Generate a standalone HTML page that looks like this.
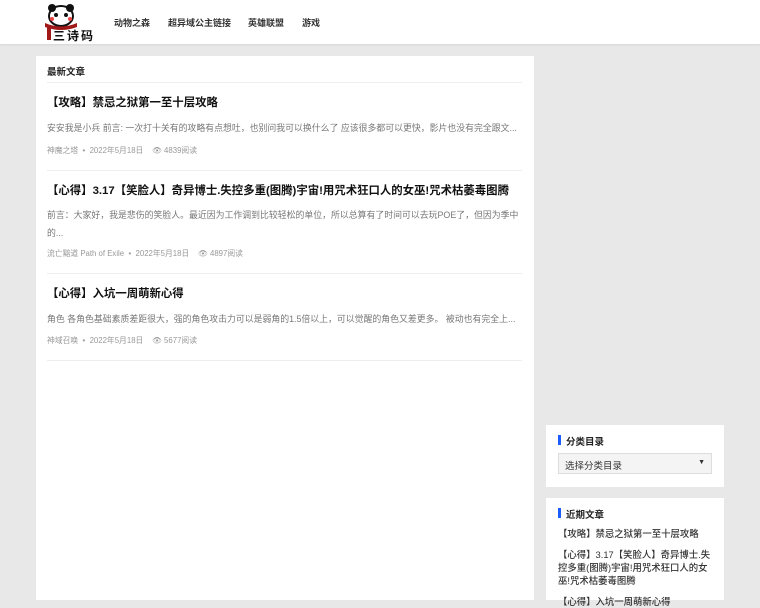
<!DOCTYPE html>
<html><head><meta charset="utf-8"><style>
*{margin:0;padding:0;box-sizing:border-box}
body{width:760px;height:600px;overflow:hidden;background:#e8e8e8;font-family:"Liberation Sans","Noto Sans CJK SC",sans-serif;position:relative;color:#222}
.hd{position:absolute;left:0;top:0;width:760px;height:44px;background:#fff;box-shadow:0 1px 2px rgba(0,0,0,.08)}
.nav{position:absolute;top:16px;font-size:9px;font-weight:bold;color:#333}
.a{position:absolute}
.card{position:absolute;background:#fff}
.t{position:absolute;left:47px;font-size:11.4px;font-weight:bold;color:#111;white-space:nowrap}
.ex{position:absolute;left:47px;font-size:8.9px;color:#777;white-space:nowrap}
.m{position:absolute;left:47px;font-size:7.8px;color:#999;white-space:nowrap}
.sep{position:absolute;left:47px;width:475px;height:1px;background:#eee}
.sw{font-size:9.5px;font-weight:bold;position:absolute;left:566px}
.bar{position:absolute;left:558px;width:3px;height:10px;background:#1a5cff}
.sl{position:absolute;left:558px;font-size:9.4px;color:#333;line-height:13px;width:158px;font-weight:500}
</style></head><body>
<div class="hd">
<svg class="a" style="left:42px;top:3px" width="56" height="40" viewBox="0 0 56 40">
<ellipse cx="19" cy="13" rx="12" ry="10" fill="#fff" stroke="#111" stroke-width="2"/>
<circle cx="10" cy="5" r="4" fill="#111"/><circle cx="28" cy="5" r="4" fill="#111"/>
<circle cx="14" cy="12" r="2" fill="#111"/><circle cx="24" cy="12" r="2" fill="#111"/>
<circle cx="10" cy="16" r="2" fill="#e44"/><circle cx="28" cy="16" r="2" fill="#e44"/>
<path d="M3 20 Q19 27 35 20 L35 24 Q19 30 3 24Z" fill="#a01818"/>
<rect x="5" y="23" width="4" height="14" fill="#a01818"/>
<text x="11" y="37" font-size="12" font-weight="bold" fill="#111" font-family="Noto Sans CJK SC" letter-spacing="2">三诗码</text>
</svg>
<div class="nav" style="left:114px">动物之森</div>
<div class="nav" style="left:168px">超异域公主链接</div>
<div class="nav" style="left:248px">英雄联盟</div>
<div class="nav" style="left:302px">游戏</div>
</div>
<div class="card" style="left:36px;top:56px;width:498px;height:544px"></div>
<div class="a" style="left:47px;top:64px;font-size:9.5px;font-weight:bold">最新文章</div>
<div class="sep" style="top:82px"></div>
<div class="t" style="top:94px">【攻略】禁忌之狱第一至十层攻略</div>
<div class="ex" style="top:121px">安安我是小兵 前言: 一次打十关有的攻略有点想吐，也别问我可以换什么了 应该很多都可以更快，影片也没有完全跟文...</div>
<div class="m" style="top:145px">神魔之塔 &nbsp;• &nbsp;2022年5月18日 &nbsp;&nbsp;&nbsp;👁 4839阅读</div>
<div class="sep" style="top:170px"></div>
<div class="t" style="top:182px">【心得】3.17【笑脸人】奇异博士.失控多重(图腾)宇宙!用咒术狂口人的女巫!咒术枯萎毒图腾</div>
<div class="ex" style="top:208px">前言：大家好，我是悲伤的笑脸人。最近因为工作调到比较轻松的单位，所以总算有了时间可以去玩POE了，但因为季中</div>
<div class="ex" style="top:226px">的...</div>
<div class="m" style="top:248px">流亡黯道 Path of Exile &nbsp;• &nbsp;2022年5月18日 &nbsp;&nbsp;&nbsp;👁 4897阅读</div>
<div class="sep" style="top:273px"></div>
<div class="t" style="top:285px">【心得】入坑一周萌新心得</div>
<div class="ex" style="top:312px">角色 各角色基础素质差距很大，强的角色攻击力可以是弱角的1.5倍以上，可以觉醒的角色又差更多。 被动也有完全上...</div>
<div class="m" style="top:335px">神域召唤 &nbsp;• &nbsp;2022年5月18日 &nbsp;&nbsp;&nbsp;👁 5677阅读</div>
<div class="sep" style="top:360px"></div>

<div class="card" style="left:546px;top:425px;width:178px;height:62px"></div>
<div class="bar" style="top:435px"></div><div class="sw" style="top:434px">分类目录</div>
<div class="a" style="left:558px;top:453px;width:154px;height:21px;background:#f4f4f4;border:1px solid #ddd;font-size:9.5px;padding:4px 6px;color:#333">选择分类目录<span style="position:absolute;right:6px;top:5px;font-size:7px">▼</span></div>
<div class="card" style="left:546px;top:498px;width:178px;height:102px"></div>
<div class="bar" style="top:508px"></div><div class="sw" style="top:507px">近期文章</div>
<div class="sl" style="top:527px">【攻略】禁忌之狱第一至十层攻略</div>
<div class="sl" style="top:548px">【心得】3.17【笑脸人】奇异博士.失控多重(图腾)宇宙!用咒术狂口人的女巫!咒术枯萎毒图腾</div>
<div class="sl" style="top:595px">【心得】入坑一周萌新心得</div>
</body></html>
